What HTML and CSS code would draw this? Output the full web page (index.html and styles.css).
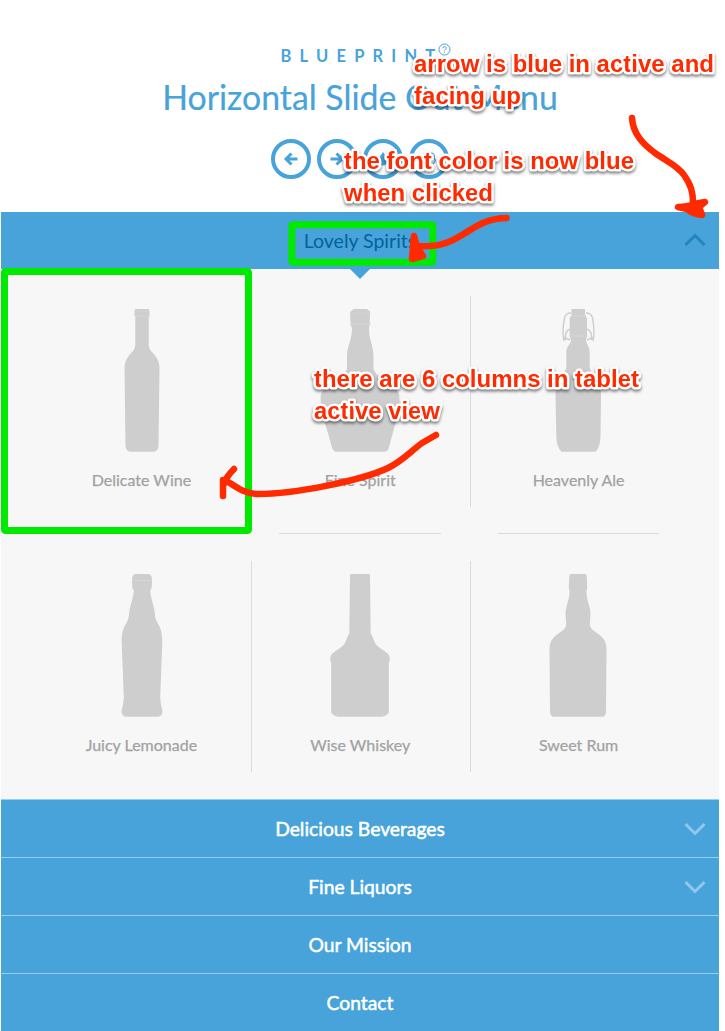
FILE: index.html
```html
<!DOCTYPE html>
<html lang="en">
<head>
<meta charset="utf-8">
<title>Horizontal Slide Out Menu</title>
<link rel="stylesheet" href="styles.css">
</head>
<body>
<div class="page">
  <header class="header">
    <div class="brand">Blueprint<svg class="help" viewBox="0 0 13 13"><circle cx="6.5" cy="6.5" r="5.5"/><path d="M4.8 5.2a1.7 1.5 0 1 1 2.5 1.3q-.8.4-.8 1.2M6.5 8.8v1"/></svg></div>
    <h1 class="title">Horizontal Slide Out Menu</h1>
    <nav class="tools">
      <a class="tool"><svg viewBox="0 0 16 16"><path d="M8.5 2.5 3 8l5.500 5.500M3.500 8H14.500"/></svg></a>
      <a class="tool"><svg viewBox="0 0 16 16"><path d="M7.500 2.500 13 8l-5.500 5.500M12.500 8H1.500"/></svg></a>
      <a class="tool"><svg viewBox="0 0 16 16"><path class="solid" d="M8 1Q12.500 7 12.500 10A4.500 4.500 0 0 1 3.500 10Q3.500 7 8 1Z"/></svg></a>
      <a class="tool"><svg viewBox="0 0 16 16"><path class="thin" d="M10 2q4 1 3 5q3 3-1 6"/></svg></a>
    </nav>
  </header>
  <main class="menu">
    <div class="row row-open"><span>Lovely Spirits</span><svg class="chevron up" viewBox="0 0 22 14"><path d="M1.500 12 11 2.500 20.500 12"/></svg></div>
    <section class="panel">
      <div class="item"><svg class="bottle" viewBox="0 0 100 143"><path d="M43 0H57V2H57.500V7H56.700V36Q56.700 39 59 42C64 47 67.500 52 67.500 59L66.500 137Q66.300 142.700 61 142.700H39Q33.700 142.700 33.500 137L32.500 59C32.500 52 36 47 41 42Q43.300 39 43.300 36V7H42.500V2H43Z"/><path class="seam" d="M42 2.300H58M42 7H58"/></svg><span>Delicate Wine</span></div>
      <div class="item"><svg class="bottle" viewBox="0 0 100 143"><path d="M44 0H57L60 2.500 59.700 16 59 19C59 32 63.500 36 63.500 48V60Q66 66 73 71L86 79 89.300 86V94L85.500 114 78.500 140 76 142.700H25L22.500 140 15 114 10.700 94V86L14 79 28 71Q35 66 37 60V48C37 36 42 32 42 19L40.700 16 40 3Z"/><path class="seam" d="M40 4H61M40 15H61"/></svg><span>Fine Spirit</span></div>
      <div class="item"><svg class="bottle" viewBox="0 0 100 143"><path d="M43.500 0H57V6L59 9V27L58 31C58 35 61.700 37 61.700 44V59Q63 63 67 68Q73 77 73 86L72.500 127Q72.300 138 67.500 142.700H33.500Q28.500 138 28.300 127L27.500 86Q27.500 77 33 68Q37 63 38.300 59V44C38.300 37 43 35 43 31L41.700 27V9L43.500 6Z"/><path class="wire" d="M43 4Q37.500 4 36.500 9C35 17 34 24 36 32M42 20Q37 22 37.500 29L42 31M58 4Q63.500 4 64.500 9C66 17 67 24 65 32M59 20Q64 22 63.500 29L59 31M35.500 28 38 31M65.500 28 63 31"/><path class="seam" d="M43 7H58M41 27H60"/></svg><span>Heavenly Ale</span></div>
      <div class="item"><svg class="bottle" viewBox="0 0 100 143"><path d="M43 0H57Q60 1 60 6L59.700 14 58.300 16C58.300 25 62.500 31 63 41C64 51 70.300 50 70.300 68L68.200 124Q68.500 129 70.300 136Q71 142 66 142.700H34Q29 142 29.700 136Q31.500 129 31.800 124L29.700 68C29.700 50 36 51 37 41C37.500 31 41.700 25 41.700 16L40.300 14 40 6Q40 1 43 0Z"/><path class="seam" d="M40 6.500H60"/></svg><span>Juicy Lemonade</span></div>
      <div class="item"><svg class="bottle" viewBox="0 0 100 143"><path d="M41 0H59Q60 0 60 2L60.700 59 63 64Q65 71 70 74L77 79Q80 81 79.800 86L78.800 89V138.500Q76 142.500 72 142.700H28Q24 142.500 21.200 138.500V89L20.200 86Q20 81 23 79L30 74Q35 71 37 64L39.300 59 40 2Q40 0 41 0Z"/></svg><span>Wise Whiskey</span></div>
      <div class="item"><svg class="bottle" viewBox="0 0 100 143"><path d="M42.500 0H57.500Q58.500 0 58.700 2L59.200 14 58.400 17C58.500 27 62.500 32 62.500 40L61.800 50Q62 54 66 57C73 62 78.500 65 78.500 75L78 139Q77 142.500 74.500 142.700H25.500Q23 142.500 22 139L21.500 75C21.500 65 27 62 34 57Q38 54 38.200 50L37.500 40C37.500 32 41.500 27 41.600 17L40.800 14 41.300 2Q41.500 0 42.500 0Z"/></svg><span>Sweet Rum</span></div>
    </section>
    <div class="row"><span>Delicious Beverages</span><svg class="chevron" viewBox="0 0 22 14"><path d="M1.500 2 11 11.500 20.500 2"/></svg></div>
    <div class="row"><span>Fine Liquors</span><svg class="chevron" viewBox="0 0 22 14"><path d="M1.500 2 11 11.500 20.500 2"/></svg></div>
    <div class="row"><span>Our Mission</span></div>
    <div class="row"><span>Contact</span></div>
  </main>
  <svg class="notes" viewBox="0 0 725 1031">
    <g class="frame"><rect x="4.500" y="271.500" width="244" height="259" rx="1"/><rect x="291.800" y="224.800" width="141" height="37.500" rx="1"/></g>
    <g class="note">
      <text x="414" y="72" textLength="300">arrow is blue in active and</text>
      <text x="414" y="104" textLength="107">facing up</text>
      <text x="344" y="169" textLength="290">the font color is now blue</text>
      <text x="344" y="201" textLength="149">when clicked</text>
      <text x="314" y="387" textLength="325">there are 6 columns in tablet</text>
      <text x="314" y="419" textLength="126">active view</text>
    </g>
    <g class="stroke">
      <path d="M632 118C633 134 643 144 655 153C668 162 678 166 684 175C691 185 693 192 693 203"/>
      <path class="head" d="M678 207Q688 207 694 204L705 202 699 207 702 215Q692 214 687 209Z"/>
      <path d="M506.500 218C486 218 474 228 462 235C446 245 436 247 415 246"/>
      <path class="head" d="M414 236 417 247 423 256 412 259Z"/>
      <path d="M436 435 422 443C410 452 402 461 388 468C360 481 294 494 258 494C243 494 234 485 225 480M234 469Q226 477 224 484M223 480V496"/>
    </g>
  </svg>
</div>
</body>
</html>
```
FILE: styles.css
```css
body {
  margin: 0;
  background: #fff;
  font-family: Lato, "Liberation Sans", sans-serif;
  color: #47a3da;
}

.page {
  position: relative;
  width: 718px;
  height: 1031px;
  padding: 0 6px 0 1px;
  overflow: hidden;
}

.header {
  height: 212px;
  box-sizing: border-box;
  padding-top: 44px;
  display: flex;
  flex-direction: column;
  align-items: center;
}

.brand {
  position: relative;
  height: 24px;
  padding-left: 4px;
  line-height: 25px;
  font-size: 16.500px;
  font-weight: 700;
  letter-spacing: 8.200px;
  text-transform: uppercase;
}

.help {
  position: absolute;
  left: 161px;
  top: -1px;
  width: 13px;
  height: 13px;
  fill: none;
  stroke: #47a3da;
}

.title {
  margin: 7px 0 0;
  height: 44px;
  line-height: 44px;
  font-size: 33.800px;
  font-weight: 400;
  white-space: nowrap;
  -webkit-text-stroke: 0.200px #47a3da;
}

.tools {
  display: flex;
  gap: 6px;
  margin-top: 20px;
}

.tool {
  width: 40px;
  height: 40px;
  box-sizing: border-box;
  border: 4px solid #47a3da;
  border-radius: 50%;
  display: flex;
  align-items: center;
  justify-content: center;
}

.tool svg {
  width: 16px;
  height: 16px;
  fill: none;
  stroke: #47a3da;
  stroke-width: 3;
}

.tool .solid {
  fill: #47a3da;
  stroke: none;
}

.tool .thin {
  stroke-width: 1.500;
}

.row {
  position: relative;
  height: 58px;
  box-sizing: border-box;
  border-top: 1px solid #99cdf0;
  background: #47a3da;
  color: #fff;
  font-size: 19.300px;
  line-height: 58px;
  text-align: center;
  -webkit-text-stroke: 0.500px #fff;
}

.row-open {
  height: 57px;
  border-top: 0;
  color: #02639d;
  font-size: 19.500px;
  -webkit-text-stroke: 0;
}

.row-open::after {
  content: "";
  position: absolute;
  z-index: 1;
  left: 349px;
  top: 57px;
  border: 10px solid transparent;
  border-top-color: #47a3da;
  border-bottom: 0;
}

.chevron {
  position: absolute;
  right: 13px;
  top: 22px;
  width: 22px;
  height: 14px;
  fill: none;
  stroke: #8fc8ea;
  stroke-width: 3;
}

.chevron.up {
  top: 21px;
  stroke: #2384bf;
}

.panel {
  height: 530px;
  box-sizing: border-box;
  padding: 0 29.500px 0 32px;
  background: #f7f7f7;
  display: grid;
  grid-template-columns: repeat(3, 1fr);
  grid-template-rows: repeat(2, 265px);
}

.item {
  position: relative;
  padding: 40px 2px 0 0;
  display: flex;
  flex-direction: column;
  align-items: center;
  color: #a2a2a2;
  font-size: 16px;
  line-height: 24px;
  -webkit-text-stroke: 0.250px #a2a2a2;
}

.item span {
  margin-top: 16px;
}

.item:nth-child(3n) {
  padding-right: 3px;
}

.item:not(:nth-child(3n))::before {
  content: "";
  position: absolute;
  right: 0;
  top: 27px;
  width: 1px;
  height: 211px;
  background: #dbdbdb;
}

.item:nth-child(-n + 3)::after {
  content: "";
  position: absolute;
  left: 27px;
  right: 30px;
  bottom: 0;
  height: 1px;
  background: #dbdbdb;
}

.bottle {
  width: 100px;
  height: 143px;
  fill: #cecece;
}

.item:nth-child(3n + 1) .bottle {
  margin-left: 1px;
}

.item:nth-child(3n) .bottle {
  margin-right: 2px;
}

.bottle .seam {
  stroke: #d8d8d8;
  stroke-width: 0.700;
}

.bottle .wire {
  fill: none;
  stroke: #cecece;
  stroke-width: 1.400;
}

.notes {
  position: absolute;
  z-index: 2;
  left: 0;
  top: 0;
  width: 725px;
  height: 1031px;
}

.frame {
  fill: none;
  stroke: #00ea00;
  stroke-width: 7;
  stroke-linejoin: round;
}

.note {
  font: 700 24px "Liberation Sans", sans-serif;
  fill: #ff2a00;
  stroke: #fff;
  stroke-width: 5px;
  stroke-linejoin: round;
  paint-order: stroke;
  filter: drop-shadow(0 2px 1.500px rgba(0, 0, 0, 0.500));
}

.stroke {
  fill: none;
  stroke: #ff2a00;
  stroke-width: 6.500;
  stroke-linecap: round;
  stroke-linejoin: round;
}

.stroke .head {
  fill: #ff2a00;
}
```
